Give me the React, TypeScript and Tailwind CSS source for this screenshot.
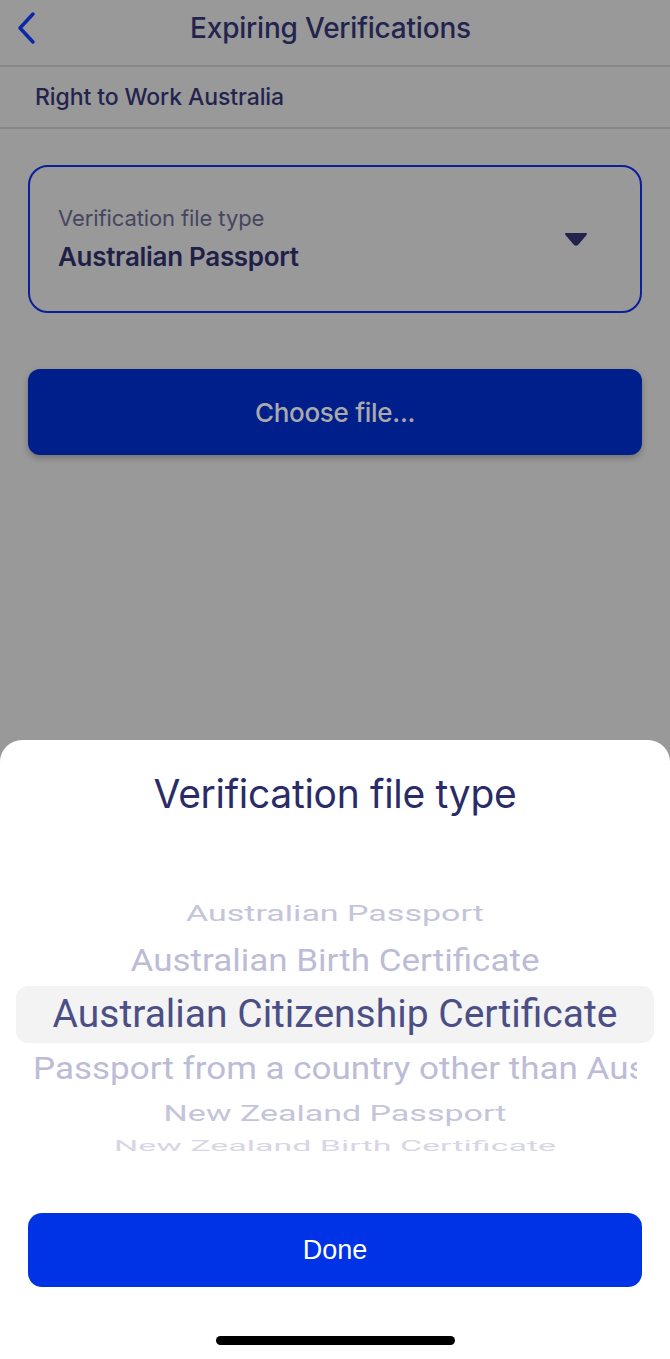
import React from "react";

const rows = [
  { label: "Australian Passport", h: "h-[43px]", text: "text-[34px] scale-y-[0.66] text-[#c4c4da]", justify: "justify-center" },
  { label: "Australian Birth Certificate", h: "h-[51px]", text: "text-[35px] scale-y-[0.88] text-[#bcbcd6]", justify: "justify-center" },
  { label: "Australian Citizenship Certificate", h: "h-[57px]", text: "text-[39px] text-[#4c4e86]", justify: "justify-center", selected: true },
  { label: "Passport from a country other than Australia", h: "h-[51px] px-[17px]", text: "text-[35px] scale-y-[0.88] origin-left text-[#bcbcd6]", justify: "justify-start overflow-hidden py-[4px]" },
  { label: "New Zealand Passport", h: "h-[39px]", text: "text-[34px] scale-y-[0.66] text-[#c4c4da]", justify: "justify-center" },
  { label: "New Zealand Birth Certificate", h: "h-[27px]", text: "text-[34px] scale-y-[0.42] text-[#d6d6e4]", justify: "justify-center" },
];

export default function App() {
  return (
    <div className="relative h-[1359px] w-[670px] overflow-hidden bg-[#999999] font-['Inter',sans-serif]">
      {/* dimmed page */}
      <header className="flex h-[67px] items-center border-b-2 border-[#878787] pb-[10px] pl-[15px] pr-3">
        <svg width="22" height="34" viewBox="0 0 22 34" className="shrink-0">
          <path d="M18 3 L5 17 L18 31" fill="none" stroke="#0a27a8" strokeWidth="3.5" strokeLinecap="round" strokeLinejoin="round" />
        </svg>
        <h1 className="flex-1 pr-[34px] text-center text-[28px] font-medium tracking-[-0.2px] text-[#23244e]">Expiring Verifications</h1>
      </header>
      <div className="flex h-[62px] items-center border-b-2 border-[#878787] px-[35px]">
        <span className="text-[23px] font-medium tracking-[-0.1px] text-[#23244e]">Right to Work Australia</span>
      </div>

      <div className="flex flex-col gap-[56px] px-[28px] pt-[36px]">
        <div className="flex h-[148px] items-center justify-between rounded-[20px] border-2 border-[#0a1f9a] pl-[28px] pr-[52px]">
          <div className="flex flex-col gap-[2px]">
            <span className="text-[22px] tracking-[-0.1px] text-[#45465f]">Verification file type</span>
            <span className="text-[26px] font-semibold tracking-[-0.3px] text-[#1f2048]">Australian Passport</span>
          </div>
          <svg width="24" height="16" viewBox="0 0 24 16">
            <path d="M2 3 H22 L13.5 13 Q12 14.5 10.5 13 Z" fill="#23244e" stroke="#23244e" strokeWidth="2" strokeLinejoin="round" />
          </svg>
        </div>
        <button className="flex h-[86px] items-center justify-center rounded-[12px] bg-[#001f8a] text-[26px] font-medium tracking-[-0.3px] text-[#aaaaaa] shadow-[0_3px_6px_rgba(0,0,0,0.25)]">
          Choose file...
        </button>
      </div>

      {/* bottom sheet */}
      <div className="absolute inset-x-0 bottom-0 top-[740px] flex flex-col rounded-t-[22px] bg-white">
        <h2 className="pt-[25px] text-center text-[39px] font-normal tracking-[-0.3px] text-[#2a2c68]">Verification file type</h2>

        <div className="relative mt-[68px] flex flex-col px-[16px]">
          {rows.map((r) => (
            <div
              key={r.label}
              className={`flex ${r.h} items-center ${r.selected ? "rounded-[12px] bg-[#f3f3f4]" : ""}`}
            >
              <div className={`flex w-full whitespace-nowrap ${r.justify}`}>
                <span className={`inline-block font-['Roboto',sans-serif] leading-none ${r.text}`}>{r.label}</span>
              </div>
            </div>
          ))}
        </div>

        <div className="mt-auto flex flex-col items-center px-[28px] pb-[14px]">
          <button className="flex h-[74px] w-full items-center justify-center rounded-[14px] bg-[#0033e6] font-['Liberation_Sans',sans-serif] text-[27px] text-white">
            Done
          </button>
          <div className="mt-[49px] h-[9px] w-[239px] rounded-full bg-black" />
        </div>
      </div>
    </div>
  );
}
